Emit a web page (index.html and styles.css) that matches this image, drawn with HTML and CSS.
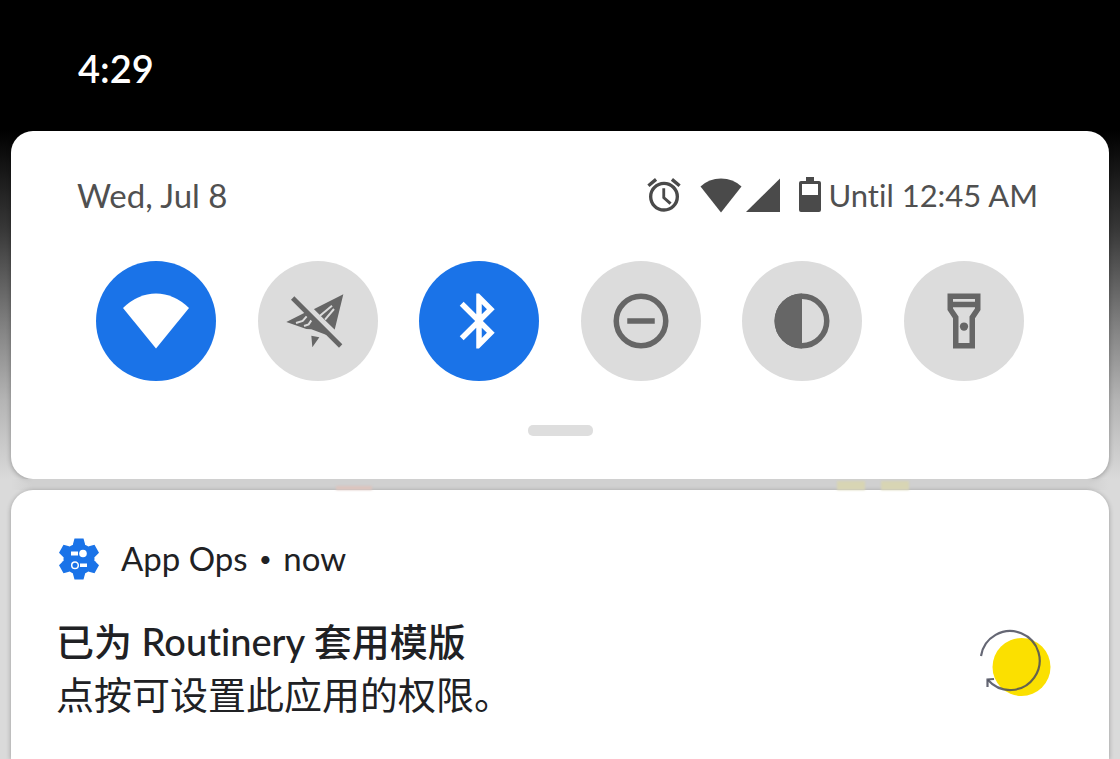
FILE: index.html
```html
<!DOCTYPE html>
<html lang="zh-CN">
<head>
<meta charset="utf-8">
<meta name="viewport" content="width=device-width, initial-scale=1">
<title>Notifications</title>
<link rel="stylesheet" href="styles.css">
</head>
<body>
<header class="statusbar"><time class="clock">4:29</time></header>
<main class="shade">
  <section class="card quick" aria-label="Quick settings">
    <div class="quick-head">
      <span class="date">Wed, Jul 8</span>
      <div class="indicators">
        <svg class="alarm" viewBox="0 0 24 24" width="40" height="40" fill="currentColor"><path d="M22 5.720l-4.600-3.860-1.290 1.530 4.600 3.860L22 5.720zM7.880 3.390L6.600 1.860 2 5.710l1.290 1.530 4.590-3.850zM12.700 8H11v6l4.300 3.900 1.250-1.350-3.850-3.350V8zM12 4c-4.970 0-9 4.030-9 9s4.020 9 9 9a9 9 0 0 0 0-18zm0 16c-3.870 0-7-3.130-7-7s3.130-7 7-7 7 3.130 7 7-3.130 7-7 7z"/></svg>
        <svg class="wifi" viewBox="0 0 42 36" width="42" height="36" fill="currentColor"><path d="M0.500 9.500Q9 1.500 21 1.500T41.500 9.500L21 35.500Z"/></svg>
        <svg class="signal" viewBox="0 0 36 36" width="36" height="36" fill="currentColor"><path d="M35 1.500V35H1Z"/></svg>
        <svg class="battery" viewBox="0 0 24 38" width="24" height="38" fill="currentColor"><path fill-rule="evenodd" d="M8 1h8v4h5q2 0 2 2v27q0 2-2 2H3q-2 0-2-2V7q0-2 2-2h5ZM4 8v11h16V8Z"/></svg>
        <span class="until">Until 12:45 AM</span>
      </div>
    </div>
    <div class="tiles">
      <button class="tile on" aria-label="Wi-Fi"><svg viewBox="-33 -33 66 66"><path fill="currentColor" d="M-33-13Q-18-27.500 0-27.500T33-13L0 27.500Z"/></svg></button>
      <button class="tile" aria-label="Mobile data"><svg viewBox="-99 -99 198 198"><path fill="currentColor" d="M76-80L-16-34 50 26ZM-95 3L-40-25 42 48-20 25-35 24ZM-20 44L4 49-17 79Z"/><path class="cut" stroke-width="6" d="M6-16L42-46M21-4L48-36M-66 6L-46 0-34-14M-42 15L-28 10-20-2"/><path class="cut" stroke-width="12" d="M-64-79L80 65"/><path stroke="currentColor" stroke-width="14" d="M-76-69L68 75"/></svg></button>
      <button class="tile on" aria-label="Bluetooth"><svg viewBox="0 0 24 24"><path fill="currentColor" d="M17.710 7.710L12 2h-1v7.590L6.410 5 5 6.410 10.590 12 5 17.590 6.410 19 11 14.410V22h1l5.710-5.710-4.300-4.290 4.300-4.290zM13 5.830l1.880 1.880L13 9.590V5.830zm1.880 10.460L13 18.170v-3.760l1.880 1.880z"/></svg></button>
      <button class="tile" aria-label="Do not disturb"><svg viewBox="0 0 24 24" fill="none" stroke="currentColor" stroke-width="2"><circle cx="12" cy="12" r="9"/><path d="M7 12h10"/></svg></button>
      <button class="tile" aria-label="Dark theme"><svg viewBox="0 0 24 24"><circle cx="12" cy="12" r="9" fill="none" stroke="currentColor" stroke-width="2"/><path fill="currentColor" d="M12 2a10 10 0 0 0 0 20Z"/></svg></button>
      <button class="tile" aria-label="Flashlight"><svg viewBox="0 0 24 24"><path fill="none" stroke="currentColor" stroke-width="2" d="M7 3h10v4.700l-2 3V21H9V10.700L7 7.700ZM7 6h10"/><circle cx="12" cy="14" r="1.500" fill="currentColor"/></svg></button>
    </div>
    <div class="handle"></div>
  </section>
  <div class="gap"><i class="glow red"></i><i class="glow"></i><i class="glow"></i></div>
  <article class="card note">
    <div class="note-head">
      <svg class="gear" viewBox="-21 -21 42 42" width="42" height="42"><g fill="#1a73e8"><circle r="15.500"/><path id="tooth" d="M-6-15L-4.500-20.500H4.500L6-15V15L4.500 20.500H-4.500L-6 15Z"/><use href="#tooth" transform="rotate(60)"/><use href="#tooth" transform="rotate(120)"/></g><g fill="#fff"><rect x="-8" y="-7.500" width="7" height="4"/><circle cx="4" cy="-5.500" r="3.800"/><rect x="1" y="4.500" width="7" height="3.500"/><circle cx="-4" cy="6.300" r="3.300" fill="none" stroke="#fff" stroke-width="1.500"/></g></svg>
      <span>App Ops <span class="dot">•</span> now</span>
    </div>
    <div class="note-body">
      <div class="note-text">
        <h1 class="title">已为 Routinery 套用模版</h1>
        <p class="text">点按可设置此应用的权限。</p>
      </div>
      <svg class="app-icon" viewBox="0 0 72 68" width="72" height="68"><circle cx="42.500" cy="38" r="29" fill="#fbe000"/><g fill="none" stroke="#4a4c5c" stroke-opacity=".85" stroke-width="2.200"><path d="M2 27A29.500 29.500 0 1 1 9 51"/><path d="M15 50L8.500 50.500V58"/></g></svg>
    </div>
  </article>
</main>
</body>
</html>
```
FILE: styles.css
```css
* { box-sizing: border-box; }
body {
  margin: 0;
  min-height: 100vh;
  display: flex;
  flex-direction: column;
  overflow: hidden;
  background: linear-gradient(#000 130px, #383838 230px, #848484 330px, #b4b4b4 400px, #dadada 480px);
  color: #202124;
  font-family: Lato, "Noto Sans CJK SC", sans-serif;
  font-variant-ligatures: none;
}
.statusbar { padding: 44px 78px 0; height: 131px; color: #fff; }
.clock { font-size: 38px; line-height: 48px; font-weight: 600; }
.shade { flex: 1; display: flex; flex-direction: column; padding: 0 11px; }
.card { background: #fff; border-radius: 22px; box-shadow: 0 1px 5px rgba(0, 0, 0, .3); }
.quick { padding: 43px 66px; }
.quick-head, .indicators, .note-head, .note-body { display: flex; align-items: center; }
.quick-head { justify-content: space-between; font-size: 33px; line-height: 42px; color: #505050; }
.indicators { padding-right: 5px; }
.until { font-size: 31px; }
.alarm { margin-right: 16px; }
.wifi { margin-right: 3px; }
.signal { margin-right: 17px; }
.battery { margin-right: 6px; }
.indicators svg { color: #4a4a4a; }
.tiles { display: flex; justify-content: space-between; padding: 45px 19px 0; }
.tile {
  width: 120px;
  height: 120px;
  padding: 0;
  border: 0;
  border-radius: 50%;
  display: grid;
  place-items: center;
  background: #dcdcdc;
  color: #666;
}
.tile.on { background: #1a73e8; color: #fff; }
.tile svg { width: 66px; height: 66px; }
.cut { fill: none; stroke: #dcdcdc; }
.handle { width: 65px; height: 11px; margin: 44px auto 0; border-radius: 5px; background: #dedede; }
.gap { height: 11px; display: flex; align-items: flex-end; gap: 16px; padding: 0 200px 0 325px; background: linear-gradient(90deg, transparent, #d0d0d0 22px calc(100% - 22px), transparent); }
.glow { width: 28px; height: 9px; background: #d8d5b4; filter: blur(1px); }
.glow.red { width: 36px; height: 4px; margin-right: auto; background: #dcc4be; }
.note { flex: 1; padding: 45px 45px 0; border-radius: 22px 22px 0 0; }
.note-head { gap: 21px; padding-left: 2px; font-size: 33px; line-height: 46px; }
.dot { font-size: 22px; vertical-align: 4px; margin: 0 3px; }
.note-body { justify-content: space-between; padding: 33px 13px 0 0; }
.app-icon { margin-bottom: 11px; }
.title, .text { margin: 0; font-size: 38px; line-height: 53px; }
.title { font-weight: 500; }
.text { font-weight: 400; }
```
